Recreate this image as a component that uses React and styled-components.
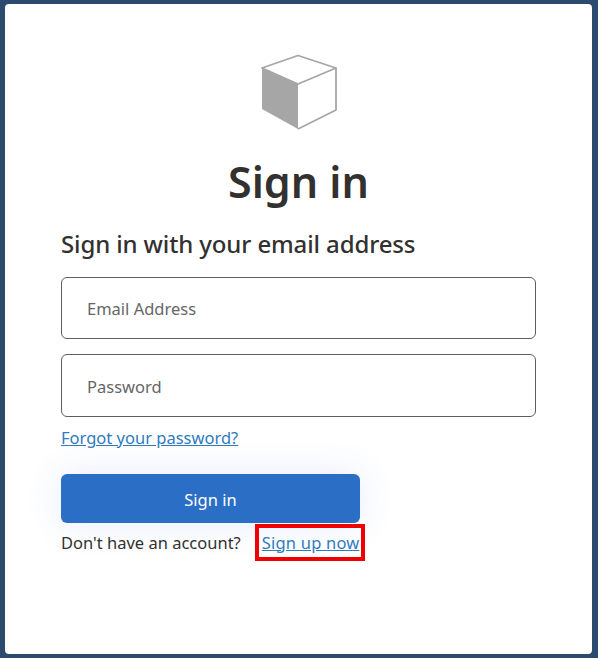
import React from 'react';
import styled, { createGlobalStyle } from 'styled-components';

const Global = createGlobalStyle`
  html, body { margin: 0; padding: 0; }
  body { background: #2b4a6e; font-family: "Noto Sans", "Open Sans", sans-serif; }
`;

const Page = styled.div`
  width: 598px;
  height: 658px;
  box-sizing: border-box;
  padding: 4px 6px 4px 5px;
  overflow: hidden;
`;

const Card = styled.main`
  height: 650px;
  box-sizing: border-box;
  background: #fff;
  border-radius: 4px;
  padding: 50px 56px 0;
  display: flex;
  flex-direction: column;
`;

const Logo = styled.svg`
  display: block;
  align-self: center;
  width: 76px;
  height: 76px;
  margin-left: 1px;
`;

const Title = styled.h1`
  margin: 22px 0 0;
  font-size: 43px;
  line-height: 60px;
  font-weight: 600;
  color: #323130;
  text-align: center;
`;

const Subtitle = styled.h2`
  margin: 15px 0 0;
  font-size: 24px;
  line-height: 34px;
  font-weight: 500;
  color: #323130;
  letter-spacing: -0.13px;
`;

const Field = styled.input`
  display: block;
  width: 475px;
  height: ${p => p.$h}px;
  box-sizing: border-box;
  margin-top: ${p => p.$top}px;
  padding: 1px 25px 0;
  border: 1px solid #605e5c;
  border-radius: 6px;
  background: #fff;
  outline: none;
  font-family: inherit;
  font-size: 16.5px;
  color: #323130;
  &::placeholder { color: #666; opacity: 1; }
`;

const TextLink = styled.a`
  color: #2f7bbd;
  text-decoration: underline;
  font-size: 16.5px;
  line-height: 24px;
  letter-spacing: ${p => p.$spacing || 0}px;
`;

const ForgotRow = styled.div`
  margin-top: 9px;
  height: 24px;
  display: flex;
  align-items: center;
`;

const Submit = styled.button`
  display: block;
  width: 299px;
  height: 49px;
  margin-top: 24px;
  padding: 2px 0 0;
  border: none;
  border-radius: 6px;
  background: #2a6ec6;
  color: #fff;
  font-family: inherit;
  font-size: 16.5px;
  box-shadow: 0 0 36px rgba(60, 90, 220, 0.12);
`;

const SignupRow = styled.div`
  display: flex;
  align-items: center;
  margin-top: 7px;
  height: 25px;
  font-size: 16.5px;
  color: #323130;
`;

const Highlight = styled.span`
  margin-left: 14px;
  border: 4px solid #f00000;
  padding: 2px 2px 2px 3px;
  display: flex;
  align-items: center;
  height: 37px;
  box-sizing: border-box;
`;

function CubeLogo() {
  return (
    <Logo viewBox="0 0 76 76">
      <path d="M1 14 L37 30 V75 L1 55 Z" fill="#a6a6a6" />
      <path
        d="M1 14 L37 1.5 L75 14 L37 30 Z M37 30 L75 14 V56 L37 75"
        fill="#fff"
        stroke="#a6a6a6"
        strokeWidth="1.8"
        strokeLinejoin="round"
      />
    </Logo>
  );
}

export default function App() {
  return (
    <Page>
      <Global />
      <Card>
        <CubeLogo />
        <Title>Sign in</Title>
        <Subtitle>Sign in with your email address</Subtitle>
        <Field placeholder="Email Address" $h={62} $top={16} />
        <Field placeholder="Password" type="password" $h={63} $top={15} />
        <ForgotRow>
          <TextLink href="#">Forgot your password?</TextLink>
        </ForgotRow>
        <Submit>Sign in</Submit>
        <SignupRow>
          Don't have an account?
          <Highlight>
            <TextLink href="#" $spacing={0.2}>Sign up now</TextLink>
          </Highlight>
        </SignupRow>
      </Card>
    </Page>
  );
}
